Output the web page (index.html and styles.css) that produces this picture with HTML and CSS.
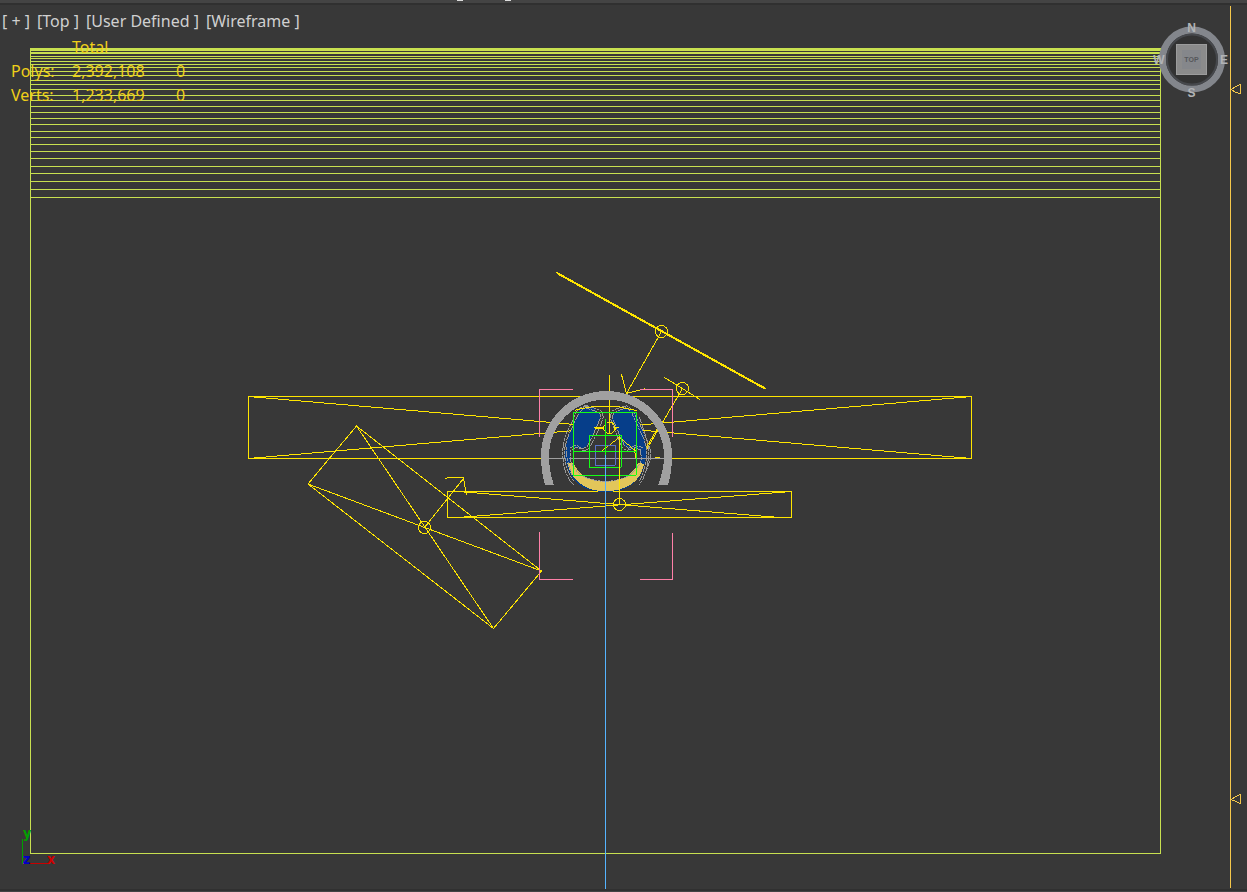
FILE: index.html
```html
<!DOCTYPE html>
<html lang="en">
<head>
<meta charset="utf-8">
<title>Top viewport</title>
<link rel="stylesheet" href="styles.css">
</head>
<body>
<div class="app">
  <header class="topbar"><span class="tick"></span><span class="tick"></span></header>
  <main class="viewport">
    <svg class="scene" viewBox="0 5 1247 884" role="img" aria-label="Wireframe scene, top view">
      <path class="lime" d="M30.500 48V853.500H1160.500V48"/>
      <path class="lime" d="M30 48.500H1161M30 49.500H1161M30 50.500H1161M30 52.500H1161M30 53.500H1161M30 56.500H1161M30 58.500H1161M30 61.500H1161M30 64.500H1161M30 67.500H1161M30 71.500H1161M30 75.500H1161M30 80.500H1161M30 84.500H1161M30 89.500H1161M30 95.500H1161M30 100.500H1161M30 106.500H1161M30 112.500H1161M30 118.500H1161M30 124.500H1161M30 131.500H1161M30 137.500H1161M30 144.500H1161M30 151.500H1161M30 158.500H1161M30 166.500H1161M30 173.500H1161M30 181.500H1161M30 189.500H1161M30 197.500H1161"/>

      <g class="light">
        <path d="M248.500 396.500H971.500V458.500H248.500ZL971.500 458.500M248.500 458.500L971.500 396.500M609.500 375V433"/>
        <circle cx="609.500" cy="427.500" r="6"/>
        <path d="M447.500 491.500H791.500V517.500H447.500ZM458 491.500L780 517.500M791.500 491.500L458 517.500"/>
        <circle cx="619.500" cy="504.500" r="6"/>
        <path d="M356.500 426L308 484L493.500 628.500L541.500 571ZL493.500 628.500M308 484L541.500 571M424.500 527.500L463.500 478.500M445 478.500L449 477.500H463.500L466.500 495.500"/>
        <circle cx="424.500" cy="527.500" r="6"/>
        <path class="thick" d="M557 273L764 388"/>
        <path d="M556 272L559 275M762 386L766 389M661.500 331.500L626.500 393.500M621.500 374.500L626.500 393.500L645.500 388.500M664.500 377.500L700 399.500M682.500 388.500L658 430L645 452M650 458H655L660 457"/>
        <circle cx="661.500" cy="331.500" r="6"/>
        <circle cx="682.500" cy="388.500" r="6"/>
      </g>
      <path class="pink" d="M539.500 437V389.500H573M640 389.500H672.500V437M539.500 532V579.500H573M640 579.500H672.500V533"/>

      <path class="arch" d="M545 485Q541 472 541 456A65.500 65 0 0 1 672 456Q672 472 668 485H658Q664 470 664 456A57 56 0 0 0 549 456Q549 472 554 485Z"/>
      <path class="grey" d="M548 458.500H665"/>

      <g transform="translate(530 370) scale(.33333)">
        <path class="blue" d="M150 117L170 112L190 115L212 133L207 155L185 200L167 232L150 237L121 230L119 280Q150 337 226 337Q305 337 329 285L333 250L326 238L300 239L280 225L262 180L246 150L248 133L275 116L302 116L322 135L340 190Q350 230 347 260Q337 366 226 366Q115 366 105 255Q107 205 140 140Z"/>
        <path class="fill-bg" d="M121 240L150 240L168 235L212 150L226 120L244 155L274 227L300 244L331 248L329 285Q300 335 226 335Q145 335 123 285Z"/>
        <path class="gold" d="M112 280L130 278Q152 333 226 334Q300 333 325 278L342 282Q325 362 226 364Q135 362 112 280Z"/>
        <g class="wire">
          <path d="M99 235V265Q102 315 130 344M105 232V265Q109 303 132 333M99 235L105 200L142 121L164 106L188 113L214 122L220 140L210 170L178 235L163 243L138 232L122 240L121 270Q140 332 226 334M105 232L112 204L147 128L165 113L184 119L208 128L213 140L200 171L172 230L158 236L139 226L120 233M148 115L174 107M111 231V265L125 315"/>
          <path d="M355 235V265Q350 315 328 344M349 232V265Q344 303 328 333M355 235L349 205L318 140L311 122L291 107L270 113L246 122L240 140L248 166L276 232L290 242L314 232L332 240L334 270Q310 332 226 334M349 232L341 205L310 140L304 125L288 113L270 120L250 130L247 142L256 166L282 224L295 235L316 226L338 233M361 240V268L350 300M328 141L361 240"/>
        </g>
        <path class="grey-z" d="M118 265H400"/>
        <path class="yellow-z" d="M134 121L160 115L190 110H265L320 122M238 91V190M192 172H222M196 176H222M258 172H268M217 242L268 202L320 245M268 202V362M312 235L320 275M350 230L381 178M230 158L222 168V180L232 190H246L254 180V166L246 158Z"/>
        <path class="navy-z" d="M196.500 226.500H256.500V286.500H196.500Z"/>
        <path class="green-z" d="M130.500 127.500H319.500V316.500H130.500ZM178.500 196.500H274.500V292.500H178.500ZM130 244.500H320M226.500 147V256"/>
      </g>
      <path class="yellow" d="M619.500 436V505"/>
      <path class="sky" d="M605.500 455V889"/>

      <path class="amber" d="M1230.500 6V888M1231 89.500L1236 86.500L1240.500 84.500V93.500L1236 92.500ZM1231 799.500L1236 796.500L1240.500 794.500V803.500L1236 801.500Z"/>

      <path class="axis-y" d="M22.500 839V864"/>
      <path class="axis-x" d="M23 863.500H49"/>
      <text class="axis fy" x="23" y="838">y</text>
      <text class="axis fz" x="23" y="864">z</text>
      <text class="axis fx" x="47" y="864">x</text>

      <g class="cube">
        <circle class="cube-ring" cx="1192" cy="59.500" r="29.500"/>
        <circle class="cube-groove" cx="1192" cy="59.500" r="25"/>
        <rect class="cube-face" x="1176.500" y="44.500" width="30" height="30"/>
        <rect class="cube-inner" x="1182" y="50" width="19" height="19"/>
        <text class="cube-top" x="1191.500" y="62">TOP</text>
        <text class="dir" x="1191.500" y="32">N</text>
        <text class="dir" x="1224" y="64">E</text>
        <text class="dir" x="1191.500" y="97">S</text>
        <text class="dir" x="1159" y="64">W</text>
      </g>
    </svg>
    <nav class="labels" aria-label="Viewport settings">
      <button type="button">[ + ]</button>
      <button type="button">[Top ]</button>
      <button type="button">[User Defined ]</button>
      <button type="button">[Wireframe ]</button>
    </nav>
    <table class="stats">
      <thead><tr><td></td><th scope="col">Total</th><td></td></tr></thead>
      <tbody>
        <tr><th scope="row">Polys:</th><td>2,392,108</td><td>0</td></tr>
        <tr><th scope="row">Verts:</th><td>1,233,669</td><td>0</td></tr>
      </tbody>
    </table>
  </main>
  <footer class="bottombar"></footer>
</div>
</body>
</html>
```
FILE: styles.css
```css
* { box-sizing: border-box; }
body { margin: 0; background: #383838; font-family: "Noto Sans", sans-serif; }
.app { display: grid; grid-template-rows: 5px 1fr 3px; height: 100vh; }
.topbar { display: flex; gap: 42px; padding-left: 457px; background: #444; border-bottom: 2px solid #303030; }
.tick { width: 6px; height: 1px; background: #ddd; }
.bottombar { background: #444; border-top: 2px solid #303030; }
.viewport { position: relative; min-height: 0; overflow: hidden; background: #383838; }
.scene { display: block; width: 100%; height: 100%; shape-rendering: crispEdges; }
.scene path, .scene circle { fill: none; stroke-width: 1px; }
.scene .lime { stroke: #c8e050; }
.light { stroke: #ffe600; }
.scene .yellow { stroke: #ffe600; }
.scene .thick { stroke-width: 2px; }
.scene .pink { stroke: #ff80a8; }
.scene .arch { fill: #a0a0a0; }
.scene .grey { stroke: #a0a0a0; }
.scene .sky { stroke: #55b4ff; }
.scene .amber { stroke: #f5c84b; }
.scene .blue { fill: #063e8a; }
.scene .fill-bg { fill: #383838; }
.scene .gold { fill: #e2c65a; }
.scene .wire path { stroke: #9a9a9a; stroke-width: 3px; stroke-dasharray: 9 2; }
.scene .grey-z { stroke: #a0a0a0; stroke-width: 3px; }
.scene .yellow-z { stroke: #ffe600; stroke-width: 3px; }
.scene .navy-z { stroke: #5872cc; stroke-width: 3px; }
.scene .green-z { stroke: #14ff14; stroke-width: 3px; }
.scene .axis-y { stroke: #00a000; }
.scene .axis-x { stroke: #c80000; }
.axis { font: bold 14px "DejaVu Sans Condensed", "DejaVu Sans", sans-serif; }
.fy { fill: #00a000; }
.fz { fill: #0000c8; }
.fx { fill: #d00000; }
.cube { shape-rendering: auto; }
.scene .cube-ring { stroke: #83868c; stroke-width: 7px; fill: #333; }
.scene .cube-groove { stroke: #46484c; stroke-width: 2px; }
.cube-face { fill: #8b8b8b; stroke: #9c9c9c; }
.cube-inner { fill: #85878b; }
.cube-top { font: bold 7px "Liberation Sans", sans-serif; fill: #56585b; text-anchor: middle; }
.dir { font: bold 12px "Liberation Sans", sans-serif; fill: #b2b4b6; text-anchor: middle; }
.labels { position: absolute; top: 4px; left: 2px; display: flex; gap: 7px; }
.labels button { padding: 0; border: 0; background: none; color: #d0d0d0; font: 16px/24px "Noto Sans", sans-serif; white-space: pre; }
.stats { position: absolute; top: 30px; left: 11px; border-collapse: collapse; color: #f0d018; font-size: 16px; line-height: 24px; }
.stats th, .stats td { padding: 0; font-weight: 400; text-align: left; height: 24px; }
.stats tr > :first-child { width: 61px; }
.stats tr > :nth-child(2) { width: 104px; }
```
